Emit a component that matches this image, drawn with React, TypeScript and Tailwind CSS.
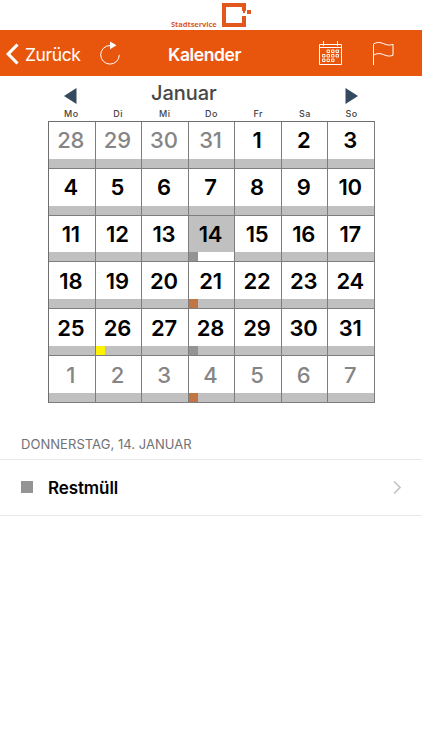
import { clsx } from "clsx";

type Pickup = "rest" | "bio" | "gelb";

type Day = {
    day: number;
    outside?: boolean;
    selected?: boolean;
    pickup?: Pickup;
};

const pickupColors: Record<Pickup, string> = {
    rest: "bg-[#949494]",
    bio: "bg-[#c27544]",
    gelb: "bg-[#fff200]",
};

const weekdays = ["Mo", "Di", "Mi", "Do", "Fr", "Sa", "So"];

const pickups: Record<number, Pickup> = {
    14: "rest",
    21: "bio",
    26: "gelb",
    28: "rest",
};

const days: Day[] = [
    ...[28, 29, 30, 31].map((day) => ({ day, outside: true })),
    ...Array.from({ length: 31 }, (_, i) => ({
        day: i + 1,
        selected: i + 1 === 14,
        pickup: pickups[i + 1],
    })),
    ...[1, 2, 3, 4, 5, 6, 7].map((day) => ({
        day,
        outside: true,
        pickup: day === 4 ? ("bio" as Pickup) : undefined,
    })),
];

function Logo() {
    return (
        <div className="flex h-[30px] shrink-0 items-start pl-[171px]">
            <span className="w-[47px] pt-[18px] font-['Open_Sans'] text-[7.5px] leading-[12px] font-bold tracking-[-0.05px] text-[#dc5a28]">
                Stadtservice
            </span>
            <svg width="32" height="30" viewBox="0 0 32 30" className="ml-[3px]" fill="#e2571b">
                <path d="M1 3h24v8h-4V7H5v16h16v-7h4v11H1z" />
                <rect x="22" y="11" width="2" height="2" />
                <rect x="26" y="10" width="4" height="4" />
            </svg>
        </div>
    );
}

function NavBar() {
    return (
        <header className="flex h-[46px] shrink-0 items-center bg-[#e8560e] text-white">
            <button className="flex items-center pt-[2px] pl-[6px]">
                <svg width="13" height="22" viewBox="0 0 13 22" fill="none" stroke="currentColor" strokeWidth="3.2">
                    <path d="M11.5 1.5 2.2 11l9.3 9.5" />
                </svg>
                <span className="ml-[6px] w-[55px] pt-[1px] text-[17.5px] leading-[22px] tracking-[-0.4px] whitespace-nowrap">Zurück</span>
            </button>
            <button className="ml-[19px]">
                <svg width="22" height="26" viewBox="0 0 22 26" fill="none" stroke="currentColor" strokeWidth="1">
                    <path d="M11 5.500a9.300 9.300 0 1 0 9.300 9.300" />
                    <path d="m11 1.500 6.500 3.800L11 9.300z" fill="currentColor" stroke="none" />
                </svg>
            </button>
            <h1 className="ml-[47px] w-[74px] pt-[3px] text-[17.5px] leading-[22px] font-semibold tracking-[-0.4px] whitespace-nowrap">Kalender</h1>
            <button className="ml-[76px]">
                <svg width="25" height="25" viewBox="0 0 25 25" fill="none" stroke="currentColor" strokeWidth="1">
                    <path d="M1.500 3.500h22v20h-22zM1.500 6.500h22M5.500 0v5M19.500 0v5" />
                    <path
                        strokeWidth="0.9"
                        d="M9 9h2.500v2.500H9zM13.500 9H16v2.500h-2.500zM18 9h2.500v2.500H18zM4.500 13.500H7V16H4.500zM9 13.500h2.500V16H9zM13.500 13.500H16V16h-2.500zM18 13.500h2.500V16H18zM4.500 18H7v2.500H4.500zM9 18h2.500v2.500H9zM13.500 18H16v2.500h-2.500z"
                    />
                </svg>
            </button>
            <button className="ml-[29px]">
                <svg width="23" height="25" viewBox="0 0 23 25" fill="none" stroke="currentColor" strokeWidth="1">
                    <path d="M1.500 24V3c3-2 6.500-2 10-.4 3.500 1.700 6.500 1.900 9.500.7v11c-3 1.200-6 1-9.500-.7-3.500-1.500-7-1.500-10 .7" />
                </svg>
            </button>
        </header>
    );
}

function DayCell({ day, outside, selected, pickup }: Day) {
    return (
        <div className="flex min-w-0 flex-col border-r border-b border-[#7d7d7d]">
            <div
                className={clsx(
                    "flex flex-1 items-center justify-center pr-[2px] text-[22px] leading-none tracking-[-0.2px]",
                    outside ? "font-medium text-[#858585]" : "font-semibold text-black",
                    selected && "bg-[#c0c0c0]",
                )}
            >
                {day}
            </div>
            <div className={clsx("h-[9px]", selected ? "bg-white" : "bg-[#c0c0c0]")}>
                {pickup && <div className={clsx("h-full w-[9px]", pickupColors[pickup])} />}
            </div>
        </div>
    );
}

function Calendar() {
    return (
        <section className="ml-[48px] w-[327px] shrink-0">
            <div className="flex h-[32px] items-start pl-[16px]">
                <svg width="13" height="16" viewBox="0 0 13 16" className="mt-[12px]" fill="#34495e">
                    <path d="M12.500 0v16L0 8z" />
                </svg>
                <h2 className="ml-[74px] w-[65px] pt-[4px] text-[20px] leading-[26px] font-medium tracking-[-0.05px] text-[#474747]">Januar</h2>
                <svg width="13" height="16" viewBox="0 0 13 16" className="mt-[12px] ml-[129px]" fill="#34495e">
                    <path d="M.5 0v16L13 8z" />
                </svg>
            </div>
            <div className="grid h-[13px] grid-cols-7 text-center text-[9px] leading-[11px] font-medium tracking-[0.5px] text-[#444]">
                {weekdays.map((name) => (
                    <span key={name}>{name}</span>
                ))}
            </div>
            <div className="grid h-[282px] grid-cols-7 grid-rows-6 border-t border-l border-[#6e6e6e]">
                {days.map((entry, i) => (
                    <DayCell key={i} {...entry} />
                ))}
            </div>
        </section>
    );
}

export default function App() {
    return (
        <main className="flex h-[750px] w-[422px] flex-col overflow-hidden bg-white font-[Inter,sans-serif]">
            <Logo />
            <NavBar />
            <Calendar />
            <h3 className="mt-[32px] pl-[21px] text-[13px] leading-[18px] tracking-[0.05px] text-[#717176]">DONNERSTAG, 14. JANUAR</h3>
            <div className="mt-[6px] flex h-[57px] shrink-0 items-center border-y border-[#e8e8e8] pr-[20px] pl-[21px]">
                <span className="mb-[2px] size-[12px] bg-[#949494]" />
                <span className="ml-[15px] text-[17px] leading-[22px] font-semibold tracking-[-0.1px] text-black">Restmüll</span>
                <svg width="9" height="15" viewBox="0 0 9 15" className="ml-auto" fill="none" stroke="#c2c2c6" strokeWidth="1.7">
                    <path d="m1 1.500 6 6-6 6" />
                </svg>
            </div>
        </main>
    );
}
